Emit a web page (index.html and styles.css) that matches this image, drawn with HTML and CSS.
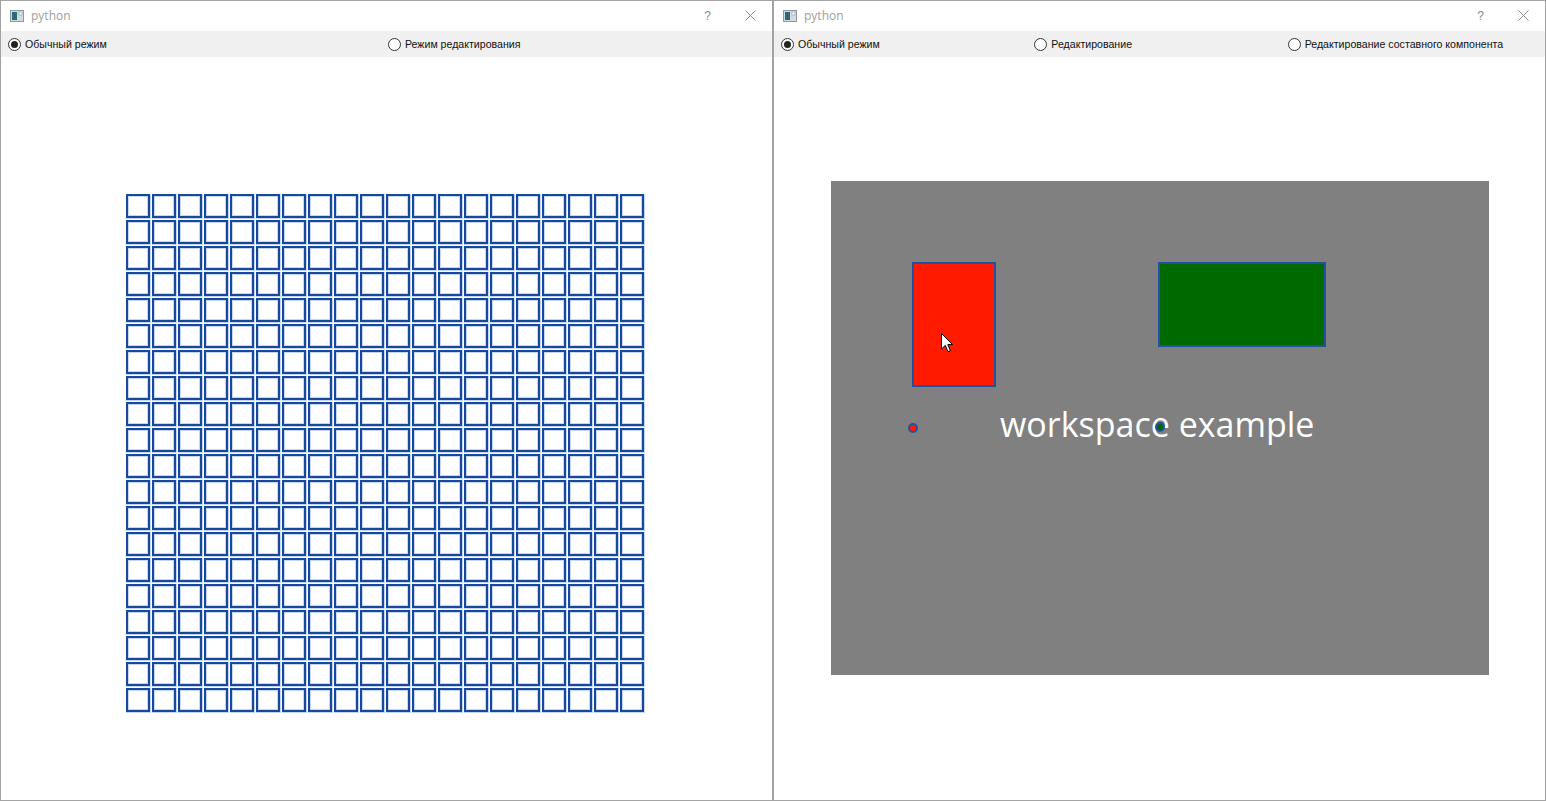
FILE: index.html
```html
<!DOCTYPE html>
<html lang="ru">
<head>
<meta charset="utf-8">
<title>python</title>
<link rel="stylesheet" href="styles.css">
</head>
<body>
<div class="desktop">
  <section class="window win-left">
    <header class="titlebar">
      <svg class="app-icon" width="14" height="12" viewBox="0 0 14 12"><rect x="0.5" y="0.5" width="13" height="11" fill="#d4dae0" stroke="#8d9aa6"/><rect x="2" y="2" width="5" height="8" fill="#2e6a74"/><rect x="9" y="2" width="3" height="3" fill="#fff" stroke="#8d9aa6" stroke-width="0.6"/></svg>
      <span class="title">python</span>
      <span class="spacer"></span>
      <span class="tb-btn help">?</span>
      <span class="tb-btn close"><svg width="11" height="11" viewBox="0 0 11 11"><path d="M0.5 0.5 L10.5 10.5 M10.5 0.5 L0.5 10.5" stroke="#8a8a8a" stroke-width="1"/></svg></span>
    </header>
    <div class="toolbar cols-2">
      <label class="radio checked"><span class="circle"></span>Обычный режим</label>
      <label class="radio"><span class="circle"></span>Режим редактирования</label>
    </div>
    <div class="content">
      <div class="grid" id="grid"></div>
    </div>
  </section>
  <section class="window win-right">
    <header class="titlebar">
      <svg class="app-icon" width="14" height="12" viewBox="0 0 14 12"><rect x="0.5" y="0.5" width="13" height="11" fill="#d4dae0" stroke="#8d9aa6"/><rect x="2" y="2" width="5" height="8" fill="#2e6a74"/><rect x="9" y="2" width="3" height="3" fill="#fff" stroke="#8d9aa6" stroke-width="0.6"/></svg>
      <span class="title">python</span>
      <span class="spacer"></span>
      <span class="tb-btn help">?</span>
      <span class="tb-btn close"><svg width="11" height="11" viewBox="0 0 11 11"><path d="M0.5 0.5 L10.5 10.5 M10.5 0.5 L0.5 10.5" stroke="#8a8a8a" stroke-width="1"/></svg></span>
    </header>
    <div class="toolbar cols-3">
      <label class="radio checked"><span class="circle"></span>Обычный режим</label>
      <label class="radio"><span class="circle"></span>Редактирование</label>
      <label class="radio"><span class="circle"></span>Редактирование составного компонента</label>
    </div>
    <div class="content">
      <div class="workspace">
        <div class="item item-red"></div>
        <div class="item item-green"></div>
        <div class="ws-label">workspace example</div>
        <div class="pin pin-red"></div>
        <div class="pin pin-green"></div>
        <svg class="cursor" width="13" height="20" viewBox="0 0 13 20"><path d="M0.5 0.5 L0.5 16 L4.3 12.4 L7 18.6 L9.4 17.6 L6.8 11.6 L11.6 11.6 Z" fill="#fff" stroke="#000" stroke-width="1" stroke-linejoin="miter"/></svg>
      </div>
    </div>
  </section>
</div>
<script src="script.js"></script>
</body>
</html>
```

FILE: styles.css
```css
* { box-sizing: border-box; }
html, body { margin: 0; padding: 0; background: #ffffff; }
body { width: 1546px; height: 802px; overflow: hidden; font-family: "Liberation Sans", Arial, sans-serif; }

.desktop { display: flex; height: 801px; }

.window {
  display: flex;
  flex-direction: column;
  height: 801px;
  border: 1px solid #a3a3a3;
  background: #ffffff;
}
.win-left { width: 773px; }
.win-right { width: 773px; }

.titlebar {
  height: 30px;
  display: flex;
  align-items: center;
  padding-left: 9px;
  background: #ffffff;
  flex: none;
}
.app-icon { display: block; margin-top: -1px; }
.title {
  margin-left: 7px;
  font-size: 12px;
  color: #a0a0a0;
  font-family: "Open Sans", "Liberation Sans", sans-serif;
  margin-top: -1px;
}
.spacer { flex: 1; }
.tb-btn {
  width: 43px;
  height: 30px;
  display: flex;
  align-items: center;
  justify-content: center;
  color: #8a8a8a;
  font-size: 12px;
}
.tb-btn.help { padding-bottom: 1px; }
.tb-btn.close svg { display: block; margin-top: -1px; }

.toolbar {
  height: 26px;
  flex: none;
  display: grid;
  column-gap: 3px;
  padding: 0 7px;
  align-items: center;
  background: #f0f0f0;
}
.cols-2 { grid-template-columns: repeat(2, 1fr); }
.cols-3 { grid-template-columns: repeat(3, 1fr); }

.radio {
  display: flex;
  align-items: center;
  font-size: 10.6px;
  color: #111;
  white-space: nowrap;
}
.circle {
  width: 13px;
  height: 13px;
  border: 1px solid #333;
  border-radius: 50%;
  background: #fff;
  margin-right: 4px;
  display: flex;
  align-items: center;
  justify-content: center;
  flex: none;
}
.radio.checked .circle::after {
  content: "";
  width: 7px;
  height: 7px;
  border-radius: 50%;
  background: #222;
}

.content { flex: 1; position: relative; }

.grid {
  margin: 137px 0 0 125px;
  display: grid;
  grid-template-columns: repeat(20, 24px);
  grid-auto-rows: 24px;
  gap: 2px;
  width: max-content;
}
.cell {
  border: 2px solid #17489c;
  box-shadow: inset 0 0 0 1px rgba(90, 140, 215, 0.35), 0 0 0.5px 0.5px rgba(90, 140, 215, 0.35);
}

.workspace {
  position: relative;
  margin: 124px 0 0 57px;
  width: 658px;
  height: 494px;
  background: #808080;
}
.item {
  position: absolute;
  border: 2px solid #2350a0;
}
.item-red { left: 81px; top: 81px; width: 84px; height: 125px; background: #ff1a00; }
.item-green { left: 327px; top: 81px; width: 168px; height: 85px; background: #006a00; }

.ws-label {
  position: absolute;
  left: 169px;
  top: 226px;
  font-family: "Open Sans", sans-serif;
  font-size: 34px;
  line-height: 34px;
  color: #ffffff;
  white-space: nowrap;
}
.pin {
  position: absolute;
  width: 10px;
  height: 10px;
  border-radius: 50%;
  border: 2px solid #2350a0;
}
.pin-red { left: 76.5px; top: 242px; background: #ff1a00; }
.pin-green { left: 324px; top: 241px; background: #006a00; }

.cursor { position: absolute; left: 110px; top: 152px; }
```

FILE: script.js
```js
(function () {
  var grid = document.getElementById('grid');
  for (var i = 0; i < 400; i++) {
    var c = document.createElement('div');
    c.className = 'cell';
    grid.appendChild(c);
  }
})();
```
